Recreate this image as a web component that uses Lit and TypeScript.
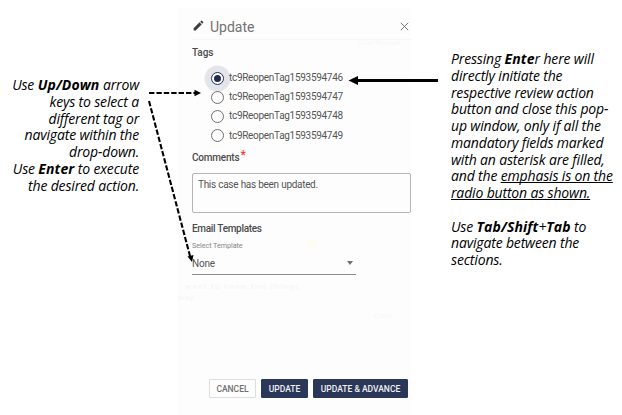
import { LitElement, html, css, svg } from "lit";
import { customElement, state } from "lit/decorators.js";

@customElement("side-note")
class SideNote extends LitElement {
  static styles = css`
    :host {
      display: block;
      font: italic 14px/16.75px "Open Sans", "Noto Sans", sans-serif;
      letter-spacing: -0.16px;
      color: #000;
      white-space: nowrap;
    }
    ::slotted(b) { letter-spacing: 0.1px; }
  `;
  render() {
    return html`<slot></slot>`;
  }
}

@customElement("update-dialog")
class UpdateDialog extends LitElement {
  @state() private selected = 0;
  private tags = [
    "tc9ReopenTag1593594746",
    "tc9ReopenTag1593594747",
    "tc9ReopenTag1593594748",
    "tc9ReopenTag1593594749",
  ];

  static styles = css`
    :host {
      display: flex;
      flex-direction: column;
      box-sizing: border-box;
      background: #fdfdfd;
      color: #555;
      font: 10px/14px Roboto, sans-serif;
      padding: 0 0 0 15px;
    }
    header {
      display: flex;
      align-items: center;
      height: 32px;
      border-bottom: 1px solid #f7f7f7;
      box-sizing: border-box;
    }
    .pencil { margin: 4px 0 0 0; }
    .title { font-size: 14px; line-height: 20px; margin: 6px auto 0 5px; color: #727272; }
    .close { margin: 5px 2px 0 0; }
    h3 { margin: 0; font-size: 10px; line-height: 14px; font-weight: 500; color: #4b4b4b; letter-spacing: -0.3px; }
    .tags { margin-top: 6px; letter-spacing: -0.1px; }
    .choices { display: flex; flex-direction: column; padding: 8.5px 0 0.5px 18.5px; }
    .choice { display: flex; align-items: center; height: 19.2px; gap: 5.5px; letter-spacing: -0.3px; }
    .radio {
      box-sizing: border-box;
      width: 13px;
      height: 13px;
      border: 1.5px solid #707070;
      border-radius: 50%;
      display: grid;
      place-items: center;
    }
    .on { border-color: #25305a; box-shadow: 0 0 0 6.5px #e4e5ea; background: #fff; }
    .dot { width: 7px; height: 7px; border-radius: 50%; background: #1f2b52; }
    .comments { margin-top: 5px; letter-spacing: -0.2px; }
    .star { color: #ed3a32; font-size: 12px; line-height: 8px; position: relative; top: -2px; margin-left: 1px; }
    .box {
      box-sizing: border-box;
      width: 219px;
      height: 40px;
      margin-top: 8px;
      border: 1px solid #b4b4b4;
      border-radius: 2px;
      padding: 4.5px 5px;
      letter-spacing: -0.33px;
      word-spacing: 0.4px;
    }
    .email { margin-top: 9px; }
    .hint { font-size: 7.2px; line-height: 10px; color: #858585; margin-top: 5.5px; letter-spacing: -0.05px; }
    .select {
      display: flex;
      justify-content: space-between;
      align-items: center;
      width: 164px;
      height: 24px;
      box-sizing: border-box;
      border-bottom: 1px solid #8c8c8c;
      padding: 2px 3px 0 0;
      letter-spacing: -0.2px;
    }
    .caret { border: 3.5px solid transparent; border-top: 4px solid #707070; border-bottom: 0; margin-bottom: 1px; }
    .actions { display: flex; gap: 5px; margin: auto 0 17px 17px; }
    .btn {
      box-sizing: border-box;
      height: 19px;
      width: 47px;
      border: 1px solid #2b3759;
      border-radius: 1px;
      background: #2b3759;
      color: #f0f1f5;
      font: 500 8.5px/18px Roboto, sans-serif;
      padding: 0;
      text-align: center;
      white-space: nowrap;
    }
    .plain { background: #fdfdfd; border-color: #dedede; color: #707070; }
    .wide { width: 95px; }
  `;

  render() {
    return html`
      <header>
        <svg class="pencil" width="13" height="13" viewBox="0 0 24 24" fill="#3c3c3c">
          <path d="M3 17.25V21h3.75L17.81 9.94l-3.75-3.75L3 17.25zM20.71 7.04a1 1 0 0 0 0-1.41l-2.34-2.34a1 1 0 0 0-1.41 0l-1.83 1.83 3.75 3.75 1.83-1.83z"/>
        </svg>
        <span class="title">Update</span>
        <svg class="close" width="9" height="9" viewBox="0 0 9 9" stroke="#777" stroke-width="1">
          <path d="M.8.8l7.4 7.4M8.2.8L.8 8.2"/>
        </svg>
      </header>
      <h3 class="tags">Tags</h3>
      <div class="choices">
        ${this.tags.map(
          (tag, i) => html`
            <div class="choice" @click=${() => (this.selected = i)}>
              <span class="radio ${i === this.selected ? "on" : ""}">
                ${i === this.selected ? html`<span class="dot"></span>` : ""}
              </span>
              <span>${tag}</span>
            </div>`
        )}
      </div>
      <h3 class="comments">Comments<span class="star">*</span></h3>
      <div class="box">This case has been updated.</div>
      <h3 class="email">Email Templates</h3>
      <div class="hint">Select Template</div>
      <div class="select"><span>None</span><span class="caret"></span></div>
      <div class="actions">
        <button class="btn plain">CANCEL</button>
        <button class="btn">UPDATE</button>
        <button class="btn wide">UPDATE &amp; ADVANCE</button>
      </div>
    `;
  }
}

@customElement("app-root")
class AppRoot extends LitElement {
  static styles = css`
    :host {
      display: grid;
      grid-template-columns: 139px 234px 1fr;
      column-gap: 38px;
      position: relative;
      width: 622px;
      height: 415px;
      background: #fff;
      overflow: hidden;
    }
    .left { text-align: right; padding-top: 77px; }
    .right { padding-top: 51px; margin-left: 2px; }
    .dialog { margin-top: 8px; }
    .arrows { position: absolute; inset: 0; pointer-events: none; }
    u { text-decoration-thickness: 1px; text-underline-offset: 1px; text-decoration-skip-ink: none; }
  `;

  render() {
    return html`
      <side-note class="left">
        Use <b>Up/Down</b> arrow<br />keys to select a<br />different tag or<br />navigate within the<br />drop-down.<br />Use <b>Enter</b> to execute<br />the desired action.
      </side-note>
      <update-dialog class="dialog"></update-dialog>
      <side-note class="right">
        Pressing <b>Ente</b>r here will<br />directly initiate the<br />respective review action<br />button and close this pop-<br />up window, only if all the<br />mandatory fields marked<br />with an asterisk are filled,<br />and the <u>emphasis is on the</u><br /><u>radio button as shown.</u><br /><br />Use <b>Tab/Shift</b>+<b>Tab</b> to<br />navigate between the<br />sections.
      </side-note>
      <svg class="arrows" width="622" height="415">
        ${svg`
          <g stroke="#000" fill="none">
            <path d="M149 93H195" stroke-width="2" stroke-dasharray="5.4 2"/>
            <path d="M149 101L190 256" stroke-width="2.1" stroke-dasharray="5.4 2"/>
            <path d="M356 80.5H438" stroke-width="3"/>
          </g>
          <path d="M194.5 89.7L201 93L194.5 96.3Z"/>
          <path d="M187.5 256.5L193.5 255L192 262Z"/>
          <path d="M348.5 80.5L358 76V85Z"/>
          <g fill="#f7f7f7" font-family="DejaVu Sans" font-size="7">
            <text x="185" y="288.5" font-weight="bold" textLength="114">want to know two things</text>
            <text x="178" y="300" font-weight="bold">way</text>
            <text x="359" y="44.5" font-size="6.5">User Manual</text>
            <text x="374" y="318" font-size="6.5">Close</text>
          </g>
          <circle cx="312" cy="244" r="6" fill="#fdfdf4"/>`}
      </svg>
    `;
  }
}
